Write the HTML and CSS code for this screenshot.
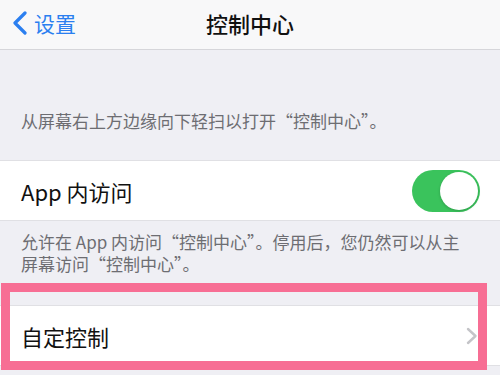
FILE: index.html
```html
<!DOCTYPE html>
<html lang="zh-CN">
<head>
    <meta charset="UTF-8">
    <meta name="viewport" content="width=device-width, initial-scale=1.0">
    <title>控制中心</title>
    <link rel="stylesheet" href="styles.css">
</head>
<body>
    <div class="nav-bar">
        <a class="back-link" href="#">
            <svg class="back-icon" width="16" height="24" viewBox="0 0 16 24">
                <path d="M13 2 L3 12 L13 22" fill="none" stroke="#2b7ff0" stroke-width="3.2" stroke-linecap="round" stroke-linejoin="round"/>
            </svg>
            <span>设置</span>
        </a>
        <h1 class="nav-title">控制中心</h1>
    </div>

    <p class="group-header">从屏幕右上方边缘向下轻扫以打开“控制中心”。</p>

    <div class="cell">
        <span class="cell-label">App 内访问</span>
        <div class="switch on"><div class="knob"></div></div>
    </div>

    <p class="group-footer">允许在 App 内访问“控制中心”。停用后，您仍然可以从主屏幕访问“控制中心”。</p>

    <div class="cell cell-link">
        <span class="cell-label">自定控制</span>
        <svg class="chevron" width="12" height="18" viewBox="0 0 12 18">
            <path d="M2 2 L9.5 9 L2 16" fill="none" stroke="#c4c4c8" stroke-width="2.4" stroke-linecap="round" stroke-linejoin="round"/>
        </svg>
    </div>

    <div class="highlight-box"></div>
</body>
</html>
```

FILE: styles.css
```css
body {
    font-family: "Noto Sans CJK SC", "Noto Sans", sans-serif;
    margin: 0;
    padding: 0;
    background-color: #efeff4;
    width: 500px;
    height: 375px;
    overflow: hidden;
    position: relative;
}
.nav-bar {
    height: 49px;
    background-color: #f8f8f9;
    border-bottom: 1px solid #d6d6da;
    display: flex;
    align-items: center;
    justify-content: center;
    position: relative;
}
.back-link {
    position: absolute;
    left: 12px;
    top: 0;
    height: 46px;
    display: flex;
    align-items: center;
    gap: 6px;
    color: #2b7ff0;
    text-decoration: none;
    font-size: 21px;
}
.nav-title {
    margin: 0 0 4px;
    font-size: 22px;
    font-weight: 500;
    color: #111;
}
.group-header {
    margin: 0;
    padding: 60px 21px 28px;
    font-size: 17px;
    line-height: 22px;
    color: #6d6d72;
}
.cell {
    height: 59px;
    background-color: #ffffff;
    border-top: 1px solid #e0e0e4;
    border-bottom: 1px solid #e0e0e4;
    display: flex;
    align-items: center;
    justify-content: space-between;
    padding: 0 20px 0 21px;
}
.cell-label {
    font-size: 22px;
    color: #111;
}
.switch {
    width: 68px;
    height: 42px;
    border-radius: 21px;
    background-color: #e5e5ea;
    display: flex;
    align-items: center;
    padding: 0 2px;
    box-sizing: border-box;
}
.switch.on {
    background-color: #3ac35c;
    justify-content: flex-end;
}
.knob {
    width: 38px;
    height: 38px;
    border-radius: 50%;
    background-color: #ffffff;
    box-shadow: 0 1px 3px rgba(0, 0, 0, 0.2);
}
.group-footer {
    margin: 0;
    padding: 10px 28px 30px 21px;
    font-size: 17px;
    line-height: 22px;
    color: #6d6d72;
}
.cell-link {
    padding-right: 22px;
}
.highlight-box {
    position: absolute;
    left: 1px;
    top: 283px;
    width: 468px;
    height: 69px;
    border: 9px solid #f76e94;
}
```
